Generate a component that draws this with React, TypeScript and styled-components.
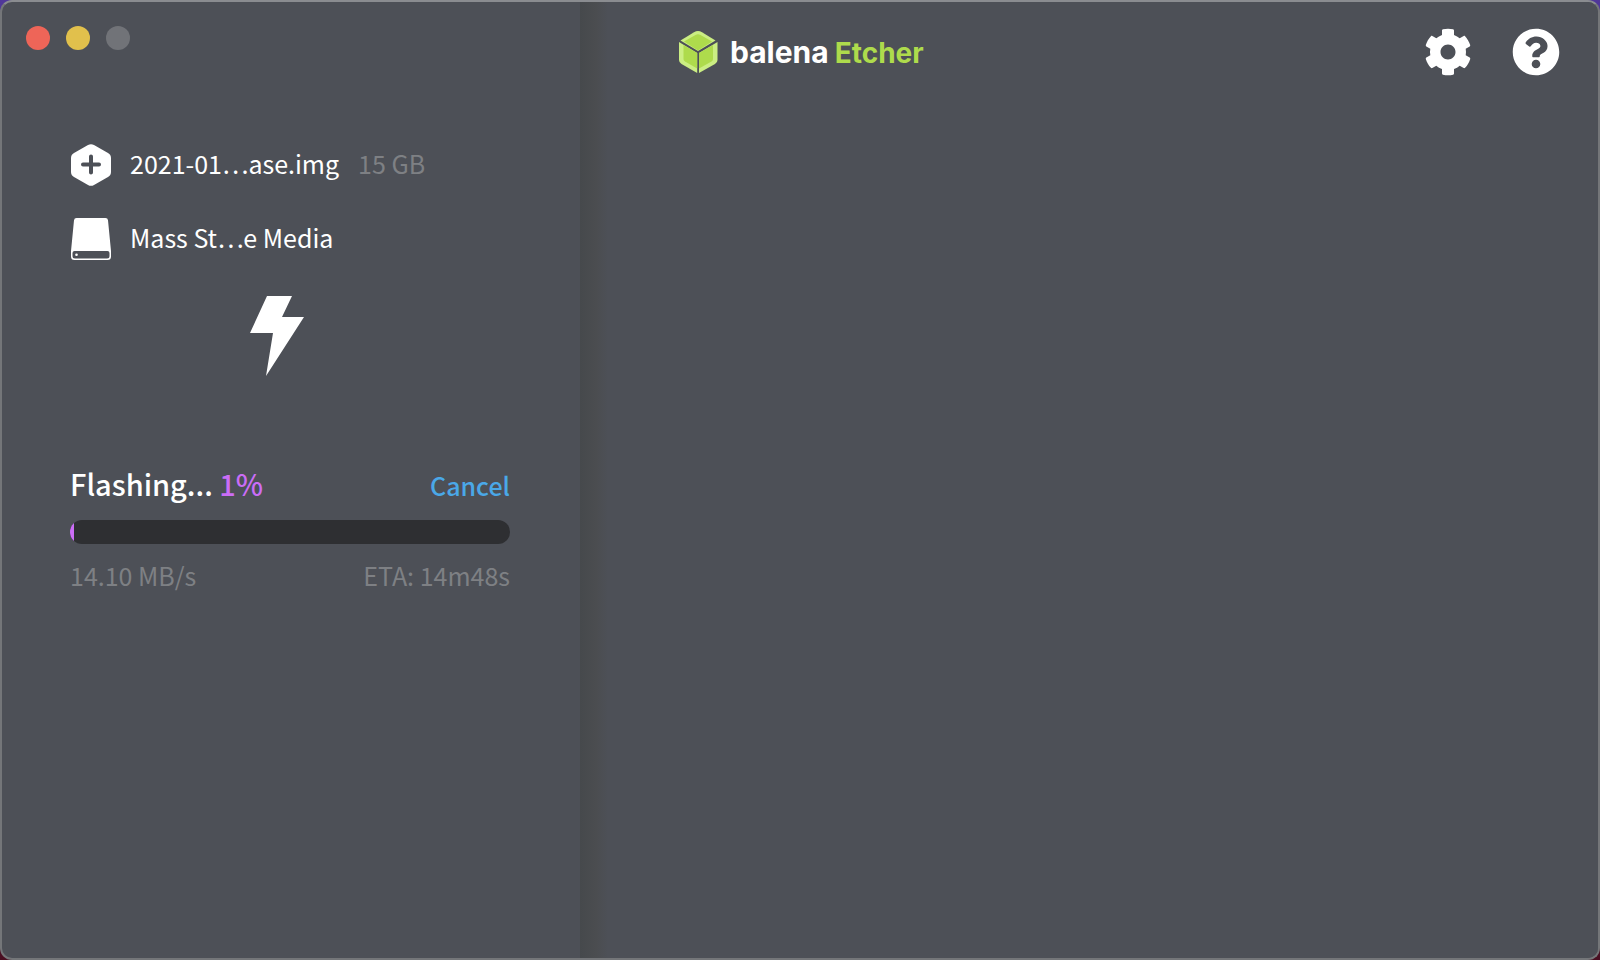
import React from 'react';
import styled, { createGlobalStyle } from 'styled-components';
import { FaCog, FaQuestionCircle } from 'react-icons/fa';

const GlobalStyle = createGlobalStyle`
  * { box-sizing: border-box; }
  body {
    margin: 0;
    background: linear-gradient(#50379a, #4a0f22);
    font-family: "Noto Sans CJK SC", "Noto Sans", sans-serif;
    color: #fff;
  }
  button { background: none; border: 0; padding: 0; font: inherit; color: inherit; cursor: pointer; }
`;

const Window = styled.div`
  display: flex;
  min-height: 100vh;
  border: 2px solid #747679;
  border-top-color: #8a8c90;
  border-radius: 12px;
  background: #4d5057;
  overflow: hidden;
`;

const Sidebar = styled.aside`
  flex: 0 0 578px;
  padding: 24px 70px 0 24px;
`;

const WindowControls = styled.div`
  display: flex;
  gap: 16px;
`;

const Control = styled.button<{ $color: string }>`
  width: 24px;
  height: 24px;
  border-radius: 50%;
  background: ${(p) => p.$color};
`;

const Panel = styled.div`
  padding: 94px 0 0 44px;
`;

const Row = styled.div`
  display: flex;
  align-items: flex-start;
  height: 42px;
  margin-bottom: 32px;
  font-size: 25px;
  line-height: 38px;
`;

const RowIcon = styled.svg`
  width: 42px;
  height: 42px;
  margin-right: 18px;
  fill: #fff;
`;

const Muted = styled.span`
  color: #7e8084;
`;

const Size = styled(Muted)`
  margin-left: 19px;
`;

const Bolt = styled.svg`
  display: block;
  width: 54px;
  height: 80px;
  margin: 36px 0 0 180px;
  fill: #fff;
`;

const Status = styled.div`
  display: flex;
  justify-content: space-between;
  align-items: baseline;
  margin-top: 87px;
  line-height: 40px;
  font-weight: 500;
  font-size: 29px;
`;

const Percent = styled.span`
  color: #cb6df6;
`;

const Cancel = styled.button`
  && {
    color: #4aa8e8;
    font-size: 25px;
    font-weight: 500;
  }
`;

const Track = styled.div`
  height: 24px;
  margin: 15px 0 11px;
  border-radius: 12px;
  background: #2e2f32;
  overflow: hidden;
`;

const Fill = styled.div`
  height: 100%;
  background: #cb6df6;
`;

const Stats = styled.div`
  display: flex;
  justify-content: space-between;
  font-size: 25px;
  line-height: 40px;
`;

const Main = styled.main`
  flex: 1;
  background: linear-gradient(to right, #46494c 0, #4b4d50 16px, #4d5057 28px);
`;

const Header = styled.header`
  display: flex;
  align-items: center;
  justify-content: space-between;
  padding: 26px 38px 0 98px;
`;

const Brand = styled.div`
  display: flex;
  align-items: center;
`;

const Cube = styled.svg`
  width: 40px;
  height: 44px;
  margin-right: 12px;
`;

const Wordmark = styled.div`
  font-family: Inter, sans-serif;
  font-size: 30px;
  line-height: 40px;
  font-weight: 700;
`;

const Product = styled.span`
  margin-left: 6px;
  font-size: 28px;
  color: #aedb4c;
`;

const Actions = styled.div`
  display: flex;
  gap: 40px;
  font-size: 48px;
`;

const IconButton = styled.button`
  display: flex;
`;

const percent = 1;

export default function App() {
  return (
    <>
      <GlobalStyle />
      <Window>
        <Sidebar>
          <WindowControls>
            <Control $color="#ee6558" aria-label="Close" />
            <Control $color="#e1c04c" aria-label="Minimize" />
            <Control $color="#717378" aria-label="Zoom" />
          </WindowControls>
          <Panel>
            <Row>
              <RowIcon viewBox="0 0 42 42">
                <path
                  fillRule="evenodd"
                  d="M18 1Q21-.7 24 1L38 9Q41 10.700 41 14V28Q41 31.300 38 33L24 41Q21 42.700 18 41L4 33Q1 31.300 1 28V14Q1 10.700 4 9ZM21 10.500a2 2 0 0 0-2 2v6h-6a2 2 0 0 0 0 4h6v6a2 2 0 0 0 4 0v-6h6a2 2 0 0 0 0-4h-6v-6a2 2 0 0 0-2-2Z"
                />
              </RowIcon>
              <span>2021-01…ase.img</span>
              <Size>15 GB</Size>
            </Row>
            <Row>
              <RowIcon viewBox="0 0 42 42">
                <path
                  fillRule="evenodd"
                  d="M6.500 0H35.500Q37.700 0 38 2.200L41 33V38.500Q41 42 37.500 42H4.500Q1 42 1 38.500V33L4 2.200Q4.300 0 6.500 0ZM4.500 33Q2.500 33 2.500 35V38Q2.500 40.500 5 40.500H37Q39.500 40.500 39.500 38V35Q39.500 33 37.500 33Z"
                />
                <circle cx="6.500" cy="36.700" r="1.300" />
              </RowIcon>
              <span>Mass St…e Media</span>
            </Row>
            <Bolt viewBox="0 0 54 80">
              <path d="M17 0H42L32 21H54L16 80L23 37H0Z" />
            </Bolt>
            <Status>
              <span>
                Flashing... <Percent>{percent}%</Percent>
              </span>
              <Cancel>Cancel</Cancel>
            </Status>
            <Track role="progressbar" aria-label="Flashing" aria-valuenow={percent}>
              <Fill style={{ width: `${percent}%` }} />
            </Track>
            <Stats>
              <Muted>14.10 MB/s</Muted>
              <Muted>ETA: 14m48s</Muted>
            </Stats>
          </Panel>
        </Sidebar>
        <Main>
          <Header>
            <Brand>
              <Cube viewBox="0 0 40 44">
                <path fill="#cbee83" d="M16 2.200Q20 0 24 2.200L37.500 10.500L20 21L2.500 10.500Z" />
                <path fill="#aedb4c" d="M17.500 5Q20 3.500 22.500 5L34 11.500L20 20.500L6 11.500Z" />
                <path fill="#cbee83" d="M1 12L19.200 23V43L3.500 34Q1 32.500 1 30Z" />
                <path fill="#aedb4c" d="M5.500 15L19.200 23V38.500L7 31.500Q5.500 30.500 5.500 29Z" />
                <path fill="#cbee83" d="M39.500 12L21 23V43L37 34Q39.500 32.500 39.500 30Z" />
                <path fill="#aedb4c" d="M35 15L21 23V38.500L33.500 31.500Q35 30.500 35 29Z" />
              </Cube>
              <Wordmark>
                balena<Product>Etcher</Product>
              </Wordmark>
            </Brand>
            <Actions>
              <IconButton aria-label="Settings">
                <FaCog />
              </IconButton>
              <IconButton aria-label="Help">
                <FaQuestionCircle />
              </IconButton>
            </Actions>
          </Header>
        </Main>
      </Window>
    </>
  );
}
